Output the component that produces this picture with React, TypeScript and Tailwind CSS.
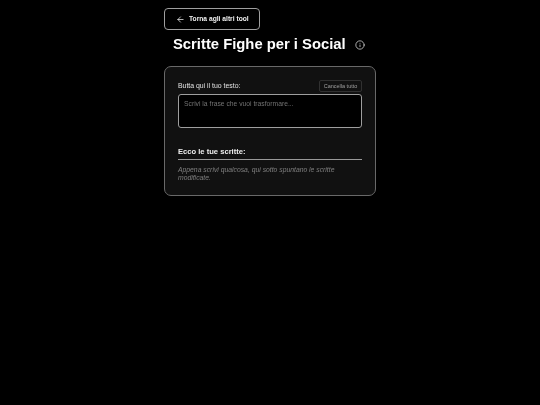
import { ArrowLeft, Info } from "lucide-react";

export default function App() {
  return (
    <div className="min-h-[405px] bg-black">
      <div className="min-h-[405px] text-white antialiased [will-change:opacity] opacity-[0.999] font-['Liberation_Sans',Arial,sans-serif]">
        <div className="w-[212px] mx-auto pt-2 flex flex-col">
          <button className="w-[96px] h-[22px] border border-[#a0a0a0] rounded-[4px] flex items-center pl-[11px] gap-[4px] text-[6.7px] font-bold text-[#f0f0f0]">
            <ArrowLeft size={9} strokeWidth={2} className="shrink-0" />
            <span className="whitespace-nowrap">Torna agli altri tool</span>
          </button>
          <div className="mt-[4px] h-[20px] flex items-center">
            <h1 className="ml-[9px] text-[14.8px] leading-[22px] font-bold whitespace-nowrap">Scritte Fighe per i Social</h1>
            <Info size={10} strokeWidth={1.75} className="ml-[9px] mt-px shrink-0 text-[#e5e5e5]" />
          </div>
          <div className="mt-[12px] h-[130px] border border-[#6a6a6a] rounded-[7px] bg-[#121212] px-[13px] pt-[13px]">
            <div className="flex items-center justify-between h-[12px]">
              <span className="text-[6.9px] text-[#e5e5e5] [will-change:opacity] opacity-[0.999]">Butta qui il tuo testo:</span>
              <button className="w-[43px] h-[12px] border border-[#333333] rounded-[2px] text-[5.5px] text-[#a0a0a0] [will-change:opacity] opacity-[0.999]">Cancella tutto</button>
            </div>
            <div className="mt-[2px] h-[34px] border border-[#a0a0a0] rounded-[3px] bg-black px-[5px] pt-[4px]">
              <p className="text-[6.75px] leading-[9px] text-[#757575] [will-change:opacity] opacity-[0.999]">Scrivi la frase che vuoi trasformare...</p>
            </div>
            <div className="mt-[19px] text-[7.6px] leading-[10px] font-bold text-[#f0f0f0] [will-change:opacity] opacity-[0.999]">Ecco le tue scritte:</div>
            <div className="mt-[2px] h-px bg-[#9a9a9a]"></div>
            <p className="mt-[6px] text-[6.8px] leading-[8px] italic text-[#808080] [will-change:opacity] opacity-[0.999]">Appena scrivi qualcosa, qui sotto spuntano le scritte modificate.</p>
          </div>
        </div>
      </div>
    </div>
  );
}
